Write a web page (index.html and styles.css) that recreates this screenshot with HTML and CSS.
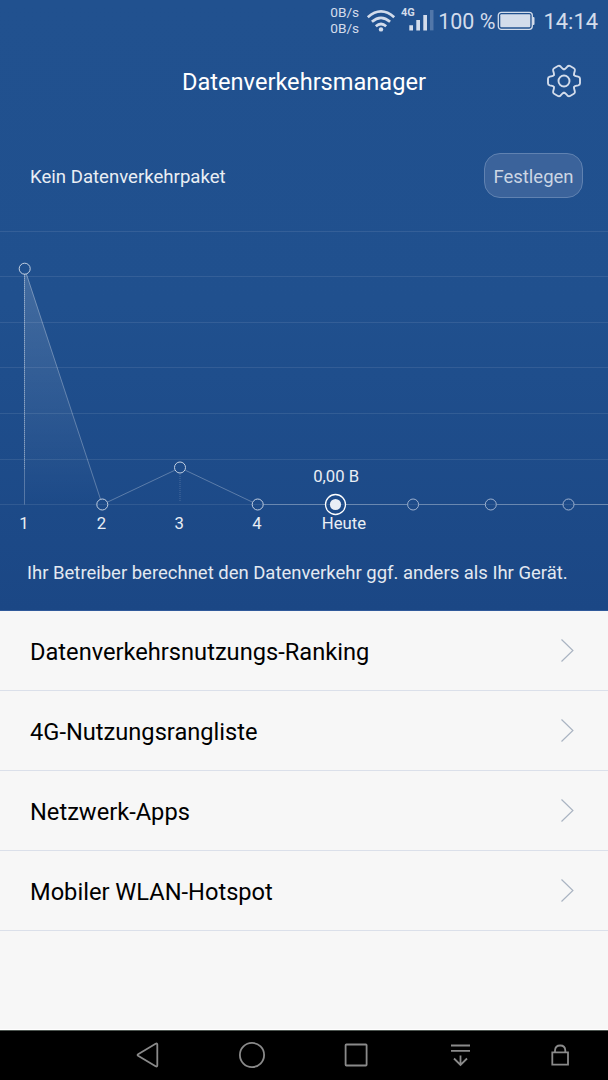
FILE: index.html
```html
<!DOCTYPE html>
<html lang="de">
<head>
    <meta charset="UTF-8">
    <meta name="viewport" content="width=device-width, initial-scale=1.0">
    <title>Datenverkehrsmanager</title>
    <link rel="stylesheet" href="styles.css">
</head>
<body>
    <div class="top">
        <div class="statusbar">
            <div class="speed"><span>0B/s</span><span>0B/s</span></div>
            <svg class="wifi" width="30" height="24" viewBox="0 0 30 24">
                <path d="M1.8 8.2Q15 -3.4 28.2 8.2M5.9 12.8Q15 4.8 24.1 12.8M9.8 17.2Q15 12.8 20.2 17.2"/>
                <circle cx="15" cy="20.4" r="2.2"/>
            </svg>
            <svg class="signal" width="34" height="34" viewBox="0 -4 34 34">
                <text x="0" y="7.5">4G</text>
                <path d="M8.3 17.2h3.700v5.200h-3.700zM15.300 12h3.700v10.400h-3.700zM22.300 7h3.700v15.400h-3.700z"/>
                <path class="dim" d="M29 2h3.500v20.400h-3.500z"/>
            </svg>
            <span class="percent">100 %</span>
            <svg class="battery" width="38" height="20" viewBox="0 0 38 20">
                <rect class="shell" x="1.300" y="1.300" width="34" height="17" rx="3"/>
                <rect x="3.300" y="3.300" width="30" height="13" rx="1"/>
                <path d="M35.500 6h1q1 0 1 1v6q0 1-1 1h-1z"/>
            </svg>
            <span class="clock">14:14</span>
        </div>

        <header class="header">
            <h1>Datenverkehrsmanager</h1>
            <svg class="gear" width="36" height="36" viewBox="-18 -18 36 36">
                <defs>
                    <path id="tooth" d="M10.2 -5.9Q10.600 -5.200 11.800 -4.900L14.200 -4.300Q16 -3.800 16 -2.200V2.200Q16 3.800 14.200 4.300L11.800 4.900Q10.600 5.200 10.200 5.900"/>
                </defs>
                <use href="#tooth"/>
                <use href="#tooth" transform="rotate(60)"/>
                <use href="#tooth" transform="rotate(120)"/>
                <use href="#tooth" transform="rotate(180)"/>
                <use href="#tooth" transform="rotate(240)"/>
                <use href="#tooth" transform="rotate(300)"/>
                <circle r="5.500"/>
            </svg>
        </header>

        <div class="package">
            <span>Kein Datenverkehrpaket</span>
            <button type="button">Festlegen</button>
        </div>

        <svg class="chart" width="608" height="325" viewBox="0 220 608 325">
            <defs>
                <linearGradient id="area" x1="0" y1="268" x2="0" y2="504" gradientUnits="userSpaceOnUse">
                    <stop offset="0" stop-color="#fff" stop-opacity="0.16"/>
                    <stop offset="1" stop-color="#fff" stop-opacity="0"/>
                </linearGradient>
                <linearGradient id="drop" x1="0" y1="268" x2="0" y2="504" gradientUnits="userSpaceOnUse">
                    <stop offset="0" stop-color="#fff" stop-opacity="0.3"/>
                    <stop offset="1" stop-color="#fff" stop-opacity="0.25"/>
                </linearGradient>
            </defs>
            <path class="grid" d="M0 231.500H608M0 276.500H608M0 322.500H608M0 367.500H608M0 413.500H608M0 459.500H608M0 504.500H608"/>
            <path class="area" d="M24.500 274L26.800 274L102 504.500H24.500z"/>
            <path class="drop" d="M24 274h1V504.500h-1z"/>
            <path class="dots" d="M24.500 274V470"/>
            <path class="dots faint" d="M180 474V502"/>
            <path class="line" d="M26.400 274L100.500 499.200M107.300 502.200L174.900 470.200M185.200 470.200L252.600 502.200M263.300 504.500H325M346 504.500H407.500M418.700 504.500H485.200M496.500 504.500H563M574 504.500H608"/>
            <g class="points">
                <circle cx="24.700" cy="268.700" r="5.500"/>
                <circle cx="102.300" cy="504.500" r="5.500"/>
                <circle cx="180" cy="467.500" r="5.500"/>
                <circle cx="257.700" cy="504.500" r="5.500"/>
                <circle class="faint" cx="413.100" cy="504.500" r="5.500"/>
                <circle class="faint" cx="490.800" cy="504.500" r="5.500"/>
                <circle class="faint" cx="568.500" cy="504.500" r="5.500"/>
            </g>
            <circle class="today-ring" cx="335.500" cy="504.500" r="10"/>
            <circle class="today-dot" cx="335.500" cy="504.500" r="5.600"/>
            <g class="labels">
                <text x="336.200" y="482">0,00 B</text>
                <text x="24" y="529">1</text>
                <text x="101.500" y="529">2</text>
                <text x="179.300" y="529">3</text>
                <text x="257" y="529">4</text>
                <text x="344" y="529">Heute</text>
            </g>
        </svg>

        <p class="note">Ihr Betreiber berechnet den Datenverkehr ggf. anders als Ihr Gerät.</p>
    </div>

    <ul class="list">
        <li><span>Datenverkehrsnutzungs-Ranking</span><svg width="14" height="24" viewBox="0 0 14 24"><path d="M1.500 0.500L12.900 11.500L1.500 22.500"/></svg></li>
        <li><span>4G-Nutzungsrangliste</span><svg width="14" height="24" viewBox="0 0 14 24"><path d="M1.500 0.500L12.900 11.500L1.500 22.500"/></svg></li>
        <li><span>Netzwerk-Apps</span><svg width="14" height="24" viewBox="0 0 14 24"><path d="M1.500 0.500L12.900 11.500L1.500 22.500"/></svg></li>
        <li><span>Mobiler WLAN-Hotspot</span><svg width="14" height="24" viewBox="0 0 14 24"><path d="M1.500 0.500L12.900 11.500L1.500 22.500"/></svg></li>
    </ul>

    <nav class="navbar">
        <svg viewBox="0 0 28 28"><path d="M4.100 13.200L21.600 2.800Q23.300 2 23.300 3.500V24.500Q23.300 26 21.600 25.200L4.100 14.800Q3 14 4.100 13.200z"/></svg>
        <svg viewBox="0 0 28 28"><circle cx="14" cy="14" r="12.100"/></svg>
        <svg viewBox="0 0 28 28"><rect x="3.600" y="3.500" width="21" height="21" rx="0.800"/></svg>
        <svg viewBox="0 0 28 28"><path d="M5 4.500H24M5 9.800H24M14.500 14.500V24M8 17.500L14.500 24L21 17.500"/></svg>
        <svg viewBox="0 0 28 28"><path d="M6.300 11.300H22V23.700H6.300zM9 11.300V9.500Q9.300 4.500 14.200 4.500T19.300 9.500V11.300"/></svg>
    </nav>
</body>
</html>
```

FILE: styles.css
```css
* { margin: 0; padding: 0; box-sizing: border-box; }
body { height: 1080px; display: flex; flex-direction: column; font-family: Roboto, sans-serif; background-color: #f7f7f7; color: #000; overflow: hidden; }
svg { display: block; flex: none; }

.top { height: 611px; display: flex; flex-direction: column; flex: none; background: linear-gradient(#21518f, #20508e 50%, #1b4785); border-bottom: 1px solid #30599a; color: #fff; }

.statusbar { height: 42px; display: flex; justify-content: flex-end; align-items: center; padding-right: 10px; color: #d3dceb; }
.speed { display: flex; flex-direction: column; font-size: 13.700px; line-height: 16px; margin: -2px 7px 0 0; }
.wifi { margin-right: 5px; }
.wifi path { fill: none; stroke: #d3dceb; stroke-width: 2.700; }
.wifi circle { fill: #d3dceb; }
.signal { margin-right: 3px; fill: #d3dceb; }
.signal text { font-size: 11px; font-weight: bold; }
.signal .dim { fill: #5277a9; }
.percent { font-size: 21.500px; margin-right: 2px; }
.battery { fill: #d3dceb; margin-right: 8px; }
.battery .shell { fill: none; stroke: #d3dceb; stroke-width: 1.300; }
.clock { font-size: 21.900px; }

.header { height: 79px; display: grid; grid-template-columns: 60px 1fr 60px; align-items: center; }
.header h1 { grid-column: 2; font-size: 23.600px; font-weight: normal; text-align: center; }
.gear { justify-self: start; margin: -1px 0 0 -2px; fill: none; stroke: #d3dceb; stroke-width: 1.900; stroke-linecap: round; }

.package { height: 99px; display: flex; justify-content: space-between; align-items: center; padding: 9px 25px 0 30px; font-size: 18.600px; color: #e9eef4; }
.package span { padding-top: 3px; }
.package button { width: 99px; height: 45px; padding-top: 3px; border: 1px solid #6082b1; border-radius: 16px; background-color: #3b639b; color: #ccd6e4; font-family: inherit; font-size: 18.500px; }

.grid { stroke: #fff; stroke-opacity: 0.09; }
.area { fill: url(#area); }
.drop { fill: url(#drop); }
.dots { stroke: #fff; stroke-opacity: 0.25; stroke-dasharray: 1 1; }
.dots.faint { stroke-opacity: 0.2; }
.line { fill: none; stroke: #fff; stroke-opacity: 0.28; }
.points circle { fill: none; stroke: #c3d0e2; stroke-width: 1; }
.points .faint { stroke: #9db1cf; }
.today-ring { fill: none; stroke: #fff; stroke-width: 1.300; }
.today-dot { fill: #e9eef5; }
.labels text { fill: #e9eef4; font-size: 16.700px; text-anchor: middle; }

.note { padding: 17px 0 0 27px; font-size: 18.480px; line-height: 22px; color: #e3e9f1; white-space: nowrap; }

.list { flex: 1; list-style: none; border-bottom: 1px solid #fff; }
.list li { height: 80px; display: flex; justify-content: space-between; align-items: center; padding: 0 34px 0 30px; border-bottom: 1px solid #dbe0ea; font-size: 23.650px; }
.list span { padding-top: 3px; }
.list svg { fill: none; stroke: #aab4c2; stroke-width: 1.200; }

.navbar { height: 50px; flex: none; display: grid; grid-template-columns: repeat(4, 104px) 96px; padding: 0 0 1px 96px; justify-items: center; align-items: center; background-color: #000; border-top: 1px solid #4d5550; }
.navbar svg { width: 28px; height: 28px; fill: none; stroke: #8a8a8a; stroke-width: 1.800; }
```
